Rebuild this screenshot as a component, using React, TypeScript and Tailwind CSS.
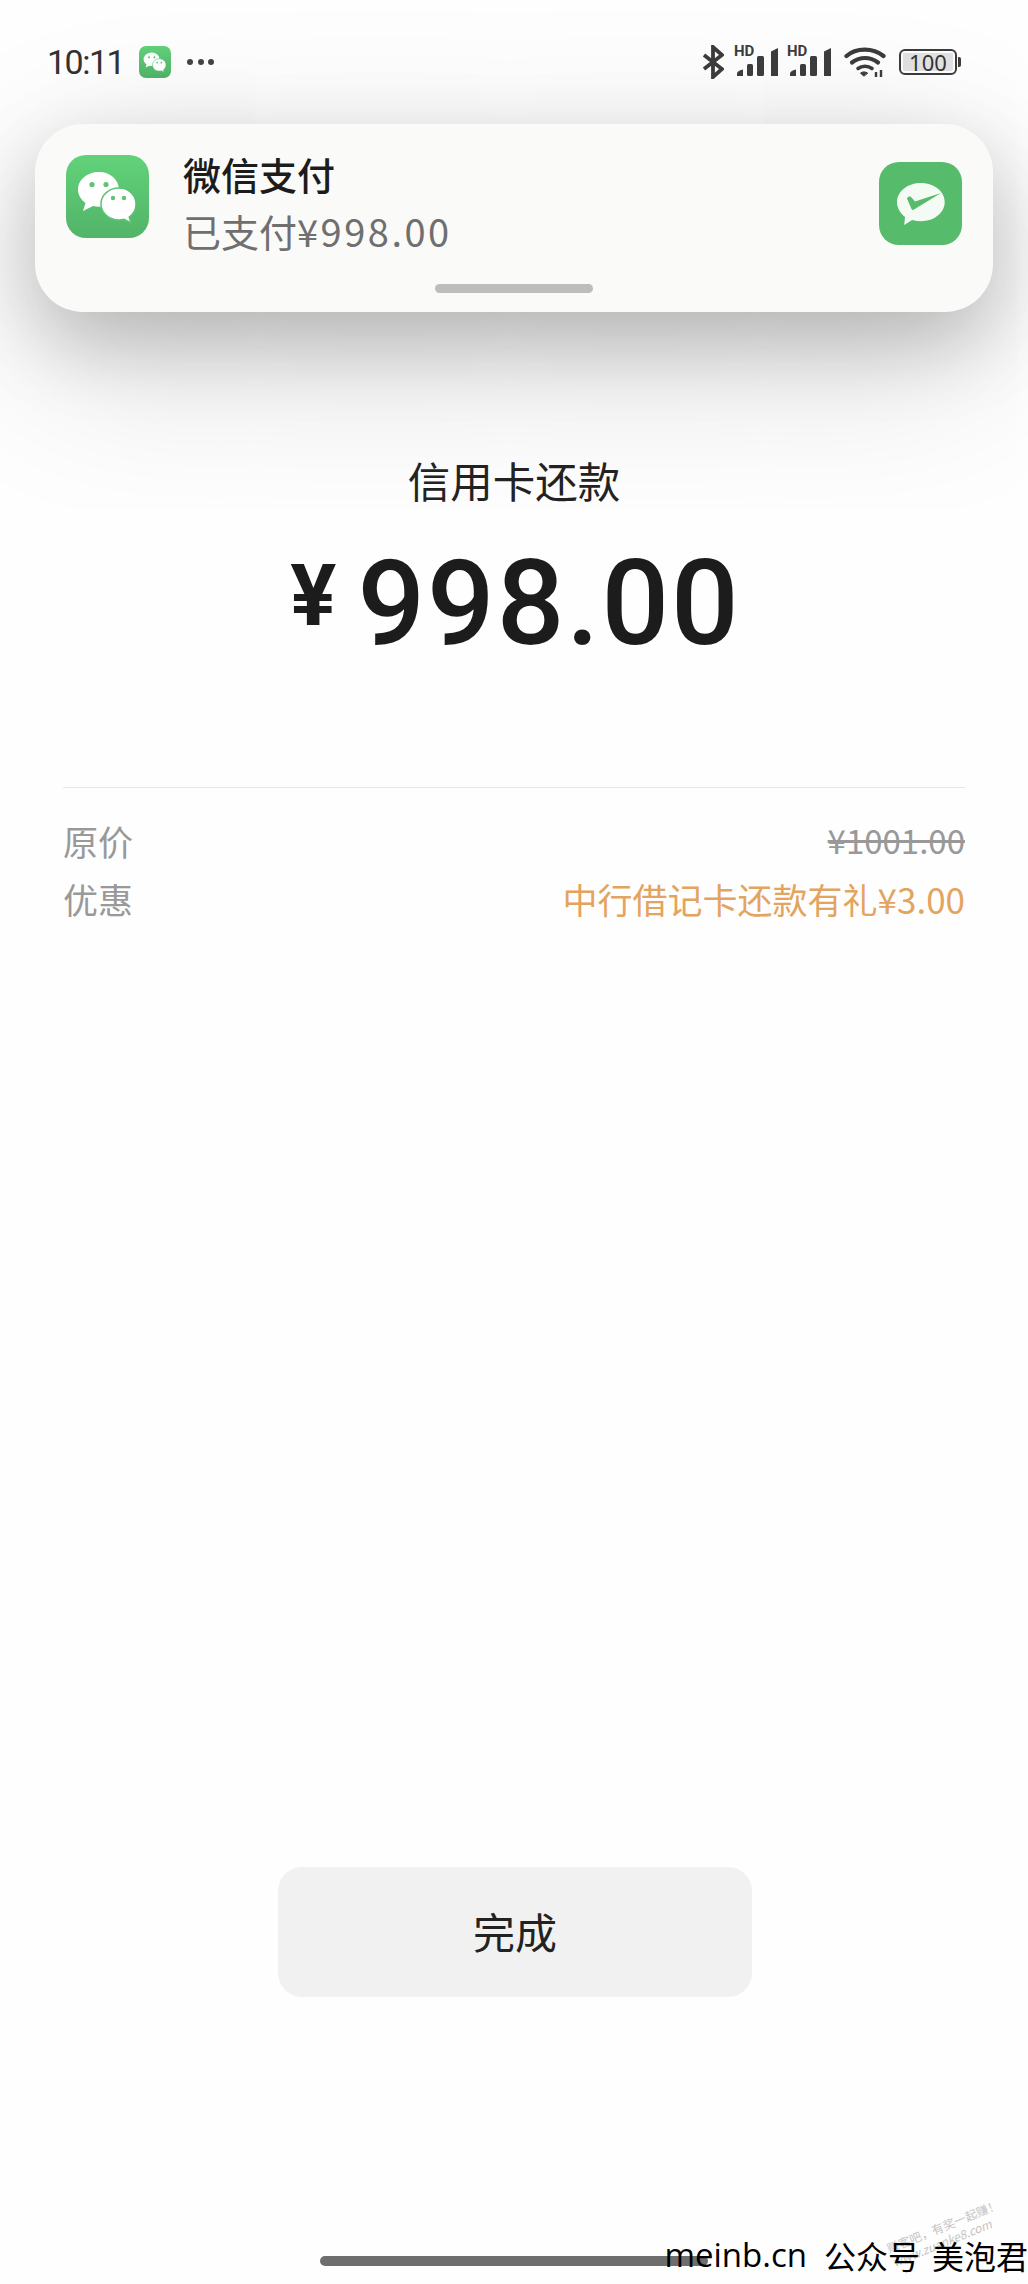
import React from 'react';

const cjk = '"Noto Sans CJK SC", "Noto Sans", sans-serif';

// Small status bar chat icon and the large notification icon share these bubbles
const ChatBubbles = ({ size }: { size: number }) => (
    <svg width={size} height={size} viewBox="0 0 83 83" fill="none">
        <path d="M33 17C21 17 12 25 12 34.500c0 5.500 3 10 7.500 13.500L17 56l10-5c2 .5 4 .8 6 .8 11 0 20-7.500 20-17.300S44 17 33 17z" fill="#fff" />
        <path d="M53 33c-10 0-18 7-18 16s8 16 18 16c2 0 3.500-.3 5-.7l7 3.700-1.800-6C67.500 59 70 54.500 70 49c0-9-7.500-16-17-16z" fill="#fff" stroke="#5cc474" strokeWidth="1.500" />
        <circle cx="26" cy="29.500" r="2.600" fill="#5cc474" />
        <circle cx="40" cy="29.500" r="2.600" fill="#5cc474" />
        <circle cx="47" cy="43" r="2.200" fill="#5cc474" />
        <circle cx="58" cy="43" r="2.200" fill="#5cc474" />
    </svg>
);

const PayMark = () => (
    <svg width="83" height="83" viewBox="0 0 83 83" fill="none">
        <path d="M42 21c-13 0-24 8-24 19 0 6 3 11 8 15l-.8 8 8-5c3 .8 6 1.200 9 1.200 13 0 23.500-8.500 23.500-19.200S55 21 42 21z" fill="#f4faf4" />
        <path d="M28 36.500l4.500 10.500c.5 1 1.500 1.200 2.500.6L62 31 36 39.500l-4-4.500c-1.200-1-3.500-.2-4 1.500z" fill="#56bb6a" />
    </svg>
);

const Signal = () => (
    <div className="relative w-[45px] h-[30px]">
        <span className="absolute left-0 top-[-3px] text-[15px] font-bold leading-[15px] text-[#3c3c3c]" style={{ fontFamily: 'Roboto, sans-serif' }}>HD</span>
        <svg className="absolute left-0 top-0" width="45" height="30" viewBox="0 0 45 30" fill="#3c3c3c">
            <path d="M3 29v-2.500Q3 24 9 22.500V29z" />
            <rect x="13" y="17" width="6" height="12" rx="1.500" />
            <rect x="23" y="9" width="7" height="20" rx="1.500" />
            <path d="M37 4.500 44 1v28h-7z" />
        </svg>
    </div>
);

const StatusBar = () => (
    <div className="h-[124px] flex items-center justify-between pl-[47px] pr-[67px]">
        <div className="flex items-center">
            <span className="text-[34px] leading-none text-[#333] w-[92px] tracking-[-1.500px]" style={{ fontFamily: 'Roboto, sans-serif' }}>10:11</span>
            <div className="w-[32px] h-[32px] rounded-[7px] bg-gradient-to-b from-[#62d27a] to-[#52b468] overflow-hidden">
                <ChatBubbles size={32} />
            </div>
            <div className="flex gap-[4.500px] ml-[16px]">
                <span className="w-[6px] h-[6px] rounded-full bg-[#444]" />
                <span className="w-[6px] h-[6px] rounded-full bg-[#444]" />
                <span className="w-[6px] h-[6px] rounded-full bg-[#444]" />
            </div>
        </div>
        <div className="flex items-center">
            <svg width="22" height="34" viewBox="0 0 22 34" fill="none" stroke="#3c3c3c" strokeWidth="3.800">
                <path d="M2 10l18 14-9 8V2l9 8L2 24" />
            </svg>
            <div className="ml-[10px]"><Signal /></div>
            <div className="ml-[8px]"><Signal /></div>
            <svg className="ml-[12px]" width="42" height="32" viewBox="0 0 42 32" fill="none" stroke="#3c3c3c" strokeWidth="4.200" strokeLinecap="round">
                <path d="M2.500 10C12 1.500 29 1.500 39.500 10" />
                <path d="M8 16.500c8-6 18-6 26 0" />
                <path d="M14 22.500c4-3 10-3 14 0" strokeWidth="3.600" />
                <path d="M19.500 30l-3-3c2-1.500 5-1.500 7 0z" fill="#3c3c3c" strokeWidth="1" />
                <path d="M32 31v-5M37 31v-7" strokeWidth="2.400" strokeLinecap="butt" />
            </svg>
            <div className="ml-[13px] flex items-center">
                <div className="w-[58px] h-[26px] rounded-[6px] border-[2px] border-[#3c3c3c] p-[2px]">
                    <div className="w-full h-full rounded-[2px] bg-[#e2e2e2] flex items-center justify-center text-[22px] leading-none text-[#333]" style={{ fontFamily: '"Noto Sans", sans-serif' }}>100</div>
                </div>
                <div className="ml-[1px] w-[3px] h-[10px] rounded-r-[2px] bg-[#3c3c3c]" />
            </div>
        </div>
    </div>
);

const NotificationCard = () => (
    <div className="mx-[35px] h-[188px] rounded-[48px] bg-[#fafaf8] pt-[31px] shadow-[0_30px_80px_rgba(0,0,0,0.22),0_50px_180px_rgba(0,0,0,0.14)]">
        <div className="h-[129px] flex items-start pl-[31px] pr-[31px]">
            <div className="w-[83px] h-[83px] rounded-[20px] bg-gradient-to-b from-[#62d27a] to-[#52b468]">
                <ChatBubbles size={83} />
            </div>
            <div className="ml-[34px] flex-1" style={{ fontFamily: cjk }}>
                <div className="text-[38px] leading-[38px] font-medium text-[#1c1c1c]">微信支付</div>
                <div className="mt-[19px] text-[38px] leading-[38px] text-[#6f6f6f]">
                    已支付<span className="tracking-[2.500px]">¥998.00</span>
                </div>
            </div>
            <div className="mt-[7px] w-[83px] h-[83px] rounded-[20px] bg-[#56bb6a]">
                <PayMark />
            </div>
        </div>
        <div className="mx-auto w-[158px] h-[9px] rounded-full bg-[#bdbdbb]" />
    </div>
);

const Summary = () => (
    <div className="flex flex-col items-center">
        <div className="mt-[138px] h-[60px] text-[42.500px] leading-[60px] text-[#222]" style={{ fontFamily: cjk }}>信用卡还款</div>
        <div className="mt-[26px] h-[133px] flex items-start text-[#1c1c1c]" style={{ fontFamily: 'Roboto, sans-serif' }}>
            <span className="mt-[10px] ml-[3px] text-[86px] leading-[100px] font-bold">¥</span>
            <span className="ml-[21px] text-[119px] leading-[136px] font-medium tracking-[2px]">998.00</span>
        </div>
    </div>
);

const DetailRows = () => (
    <div className="mt-[118px] mx-[63px]" style={{ fontFamily: cjk }}>
        <div className="border-t border-[#e6e6e6] pt-[23px]">
            <div className="flex justify-between items-center h-[58px] text-[35px] leading-none">
                <span className="text-[#999]">原价</span>
                <span className="text-[33px] text-[#999] line-through">¥1001.00</span>
            </div>
            <div className="flex justify-between items-center h-[58px] text-[35px] leading-none">
                <span className="text-[#999]">优惠</span>
                <span className="text-[#e3a45f]">中行借记卡还款有礼¥3.00</span>
            </div>
        </div>
    </div>
);

const App = () => (
    <div className="relative w-[1028px] h-[2284px] overflow-hidden bg-[#fefefe] flex flex-col">
        <StatusBar />
        <NotificationCard />
        <Summary />
        <DetailRows />

        <div className="mt-auto flex flex-col">
            <button className="ml-[278px] w-[474px] h-[130px] pb-[4px] rounded-[24px] bg-[#f1f1f1] text-[42px] text-[#222]" style={{ fontFamily: cjk }}>完成</button>
            <div className="mt-[259px] mb-[18px] ml-[320px] w-[388px] h-[10px] rounded-full bg-[#6e6e6e]" />
        </div>

        {/* watermark stamped over the screenshot */}
        <div className="absolute left-[890px] top-[2240px] -rotate-[22deg] origin-left text-[#c4c4c4] text-[12px] leading-[15px] whitespace-nowrap" style={{ fontFamily: cjk }}>
            <div>赚客吧，有奖一起赚！</div>
            <div className="italic">www.zuanke8.com</div>
        </div>
        <div className="absolute right-0 top-[2233px] flex items-center text-[32px] leading-[44px] text-black whitespace-nowrap" style={{ fontFamily: cjk }}>
            <span className="text-[33px] font-medium" style={{ fontFamily: '"Open Sans", sans-serif' }}>meinb.cn</span>
            <span className="ml-[17px]">公众号</span>
            <span className="ml-[12px]">美泡君</span>
        </div>
    </div>
);

export default App;
